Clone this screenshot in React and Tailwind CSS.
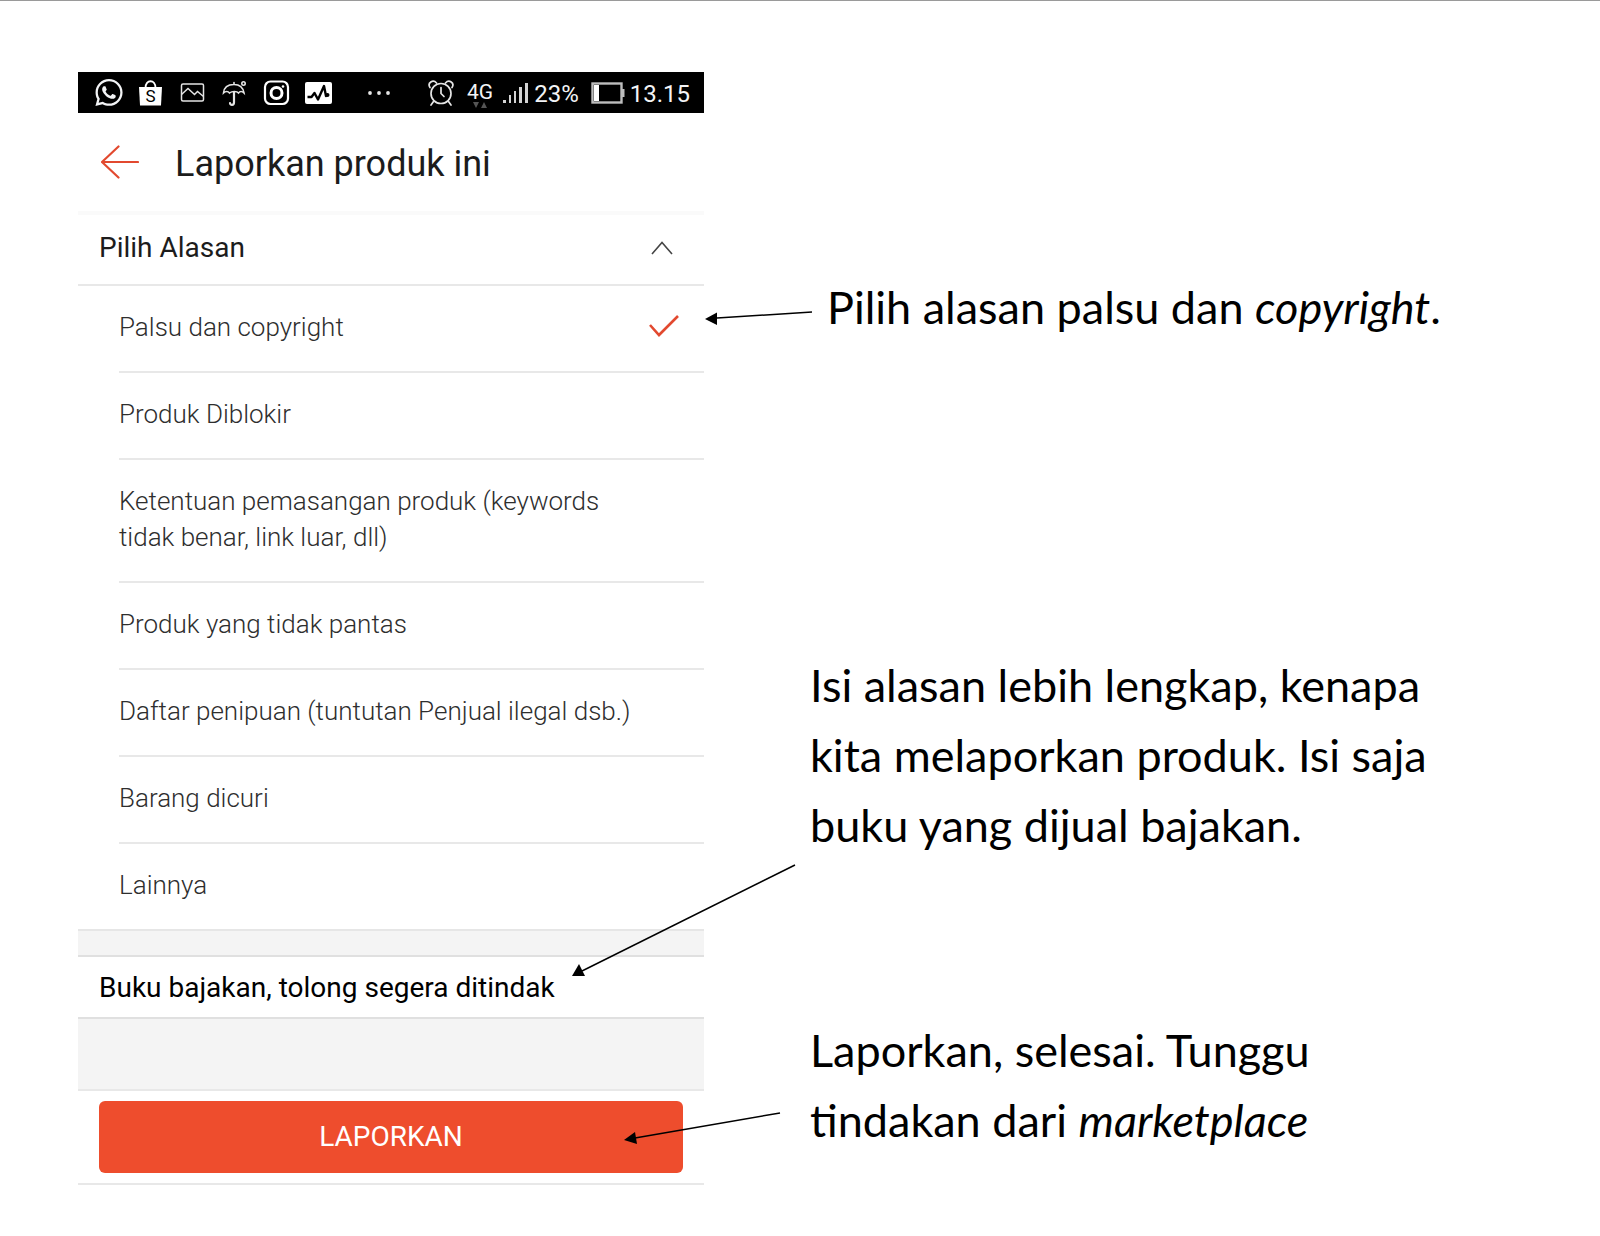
import React, { useState } from "react";
import { FaWhatsapp } from "react-icons/fa";

const reasons = [
  "Palsu dan copyright",
  "Produk Diblokir",
  "Ketentuan pemasangan produk (keywords tidak benar, link luar, dll)",
  "Produk yang tidak pantas",
  "Daftar penipuan (tuntutan Penjual ilegal dsb.)",
  "Barang dicuri",
  "Lainnya",
];

const StatusBar = () => (
  <div className="flex h-[41px] items-center justify-between bg-black pl-[17px] pr-[14px] text-[24px] leading-none text-gray-100">
    <div className="flex items-center gap-[14px]">
      <FaWhatsapp className="h-[31px] w-7" />
      {/* shopping bag */}
      <svg viewBox="0 0 28 28" className="size-7">
        <path d="M2 8h23l-1 18.500H3z" fill="#fff" />
        <path d="M8.500 9c0-9 10-9 10 0" fill="none" stroke="#fff" strokeWidth="1.800" />
        <text x="13.500" y="23" textAnchor="middle" fontSize="17" fontFamily="Roboto" fill="#000">S</text>
      </svg>
      {/* gallery */}
      <svg viewBox="0 0 28 28" className="size-7" fill="none" stroke="#e5e5e5" strokeWidth="1.500">
        <rect x="2.500" y="5" width="22" height="17" rx="1.500" />
        <path d="M2.500 15.500l6.500-6 6.500 6 3-3 6 5" />
      </svg>
      {/* umbrella */}
      <svg viewBox="0 0 28 28" className="size-7" fill="none" stroke="#e5e5e5" strokeWidth="1.600" strokeLinecap="round">
        <path d="M13 3.500v2M2.500 14C3 8 7.500 5.500 13 5.500c4.500 0 9 2.500 10 8.500-2-2-4-2-5.500 0-1.500-2-6.500-2-9 0-1.500-2-4-2-6 0z" />
        <path d="M13 13v10.500c0 3-4 3-4 .500" strokeWidth="2.200" />
        <circle cx="22.500" cy="4.500" r="1.700" />
      </svg>
      {/* camera */}
      <svg viewBox="0 0 28 28" className="size-7" fill="none" stroke="#fff">
        <rect x="2" y="2.500" width="23" height="22.500" rx="5.500" strokeWidth="2.200" />
        <circle cx="13.500" cy="14" r="5.500" strokeWidth="3" />
        <circle cx="20" cy="7.500" r="1.300" fill="#fff" stroke="none" />
      </svg>
      {/* activity */}
      <svg viewBox="0 0 28 28" className="size-7">
        <rect x="0" y="3" width="27" height="22" rx="2" fill="#fff" />
        <path d="M2.500 18h4l3-4 3.500 6.500 6-13.500 2 10 2-2" fill="none" stroke="#000" strokeWidth="2.400" strokeLinejoin="round" />
        <circle cx="22.500" cy="16" r="2" />
      </svg>
      <svg viewBox="0 0 24 8" className="ml-5 h-2 w-6" fill="#e5e5e5">
        <circle cx="3" cy="4" r="1.900" />
        <circle cx="12" cy="4" r="1.900" />
        <circle cx="21" cy="4" r="1.900" />
      </svg>
    </div>
    <div className="flex items-center">
      {/* alarm */}
      <svg viewBox="0 0 28 28" className="mr-3 size-7" fill="none" stroke="#e5e5e5" strokeWidth="1.700" strokeLinecap="round">
        <circle cx="14" cy="14.500" r="10" />
        <path d="M14 8.500v6l3 3M6.500 22.500L4 26M21.500 22.500L24 26" />
        <path d="M3 8.500C0 4 6 0 9.500 4M25 8.500C28 4 22 0 18.500 4" />
      </svg>
      <div className="mr-[10px] flex flex-col items-center pt-1 text-[21px]">
        <span className="leading-5">4G</span>
        <svg viewBox="0 0 14 6" className="h-[6px] w-[14px]" fill="#555">
          <path d="M0 0h6L3 6zM8 6h6L11 0z" />
        </svg>
      </div>
      <svg viewBox="0 0 26 22" className="mr-[5px] h-[22px] w-[26px]" fill="#d4d4d4">
        <rect x="0" y="18" width="3" height="3" />
        <rect x="6" y="13" width="2" height="8" />
        <rect x="11" y="9" width="2" height="12" />
        <rect x="16" y="5" width="3" height="16" />
        <rect x="22" y="1" width="3" height="20" />
      </svg>
      <span className="mr-3 pt-[2px]">23%</span>
      <svg viewBox="0 0 34 22" className="mr-[5px] h-[22px] w-[34px]">
        <rect x="1.500" y="1.500" width="29" height="19" fill="none" stroke="#bdbdbd" strokeWidth="2.400" />
        <rect x="3" y="3" width="5" height="16" fill="#fff" />
        <rect x="31" y="7" width="2.500" height="8" fill="#bdbdbd" />
      </svg>
      <span className="pt-[2px]">13.15</span>
    </div>
  </div>
);

const Note = ({ children, className, arrow }) => (
  <div className={`relative text-[45px] leading-[70px] ${className}`}>
    {children}
    {arrow}
  </div>
);

const ReportScreen = () => {
  const [selected, setSelected] = useState(reasons[0]);
  const [open, setOpen] = useState(true);
  const [detail, setDetail] = useState("Buku bajakan, tolong segera ditindak");

  return (
    <section className="font-[Roboto,sans-serif] text-[#1c1c1c]">
      <StatusBar />
      <header className="flex h-[98px] items-center gap-9 pl-[23px]">
        <button type="button" aria-label="Kembali">
          <svg viewBox="0 0 38 34" className="h-[34px] w-[38px]" fill="none" stroke="#e2492f" strokeWidth="2.200" strokeLinecap="round">
            <path d="M37 17H1M17.500 1.500L1 17l16.500 15.500" />
          </svg>
        </button>
        <h1 className="pt-1 text-[36px] leading-none">Laporkan produk ini</h1>
      </header>

      <button
        type="button"
        aria-expanded={open}
        onClick={() => setOpen(!open)}
        className="flex h-[75px] w-full items-center justify-between border-b-2 border-t-4 border-b-[#e8e8e8] border-t-[#fafafa] pb-1 pl-[21px] pr-[31px] text-[28px]"
      >
        Pilih Alasan
        <svg viewBox="0 0 22 14" className="h-[14px] w-[22px]" fill="none" stroke="#444" strokeWidth="1.600">
          <path d="M1 13L11 1.500 21 13" />
        </svg>
      </button>

      {open && (
        <div role="radiogroup" aria-label="Pilih Alasan" className="border-b-2 border-[#e6e6e6]">
          {reasons.map((reason) => (
            <label
              key={reason}
              className="ml-[41px] flex items-center justify-between border-b-2 border-[#e8e8e8] pb-[26px] pr-[25px] pt-[23px] text-[26px] font-light leading-9 text-[#2e2e2e] last:border-b-0"
            >
              <input
                type="radio"
                name="reason"
                className="sr-only"
                checked={selected === reason}
                onChange={() => setSelected(reason)}
              />
              <span className="max-w-[520px]">{reason}</span>
              {selected === reason && (
                <svg viewBox="0 0 30 24" className="h-6 w-[30px]" fill="none" stroke="#e2492f" strokeWidth="2.600">
                  <path d="M1 10l9 10L29 1" />
                </svg>
              )}
            </label>
          ))}
        </div>
      )}

      <div className="h-6 bg-[#f4f4f4]" />
      <input
        type="text"
        aria-label="Alasan lengkap"
        value={detail}
        onChange={(e) => setDetail(e.target.value)}
        className="block h-16 w-full border-y-2 border-[#e0e0e0] px-[21px] text-[28px] text-black outline-none"
      />
      <div className="h-[70px] bg-[#f4f4f4]" />
      <div className="border-y-2 border-[#e8e8e8] px-[21px] py-[10px]">
        <button type="button" className="block h-[72px] w-full rounded-md bg-[#ee4d2d] text-[28px] text-white">
          LAPORKAN
        </button>
      </div>
    </section>
  );
};

const App = () => (
  <main className="grid grid-cols-[626fr_789fr] border-t border-[#9a9a9a] bg-white pb-[50px] pl-[78px] pr-[107px] pt-[71px]">
    <ReportScreen />

    <aside className="flex flex-col pl-[106px] pt-[200px] font-[Lato,sans-serif] text-black">
      <Note
        className="pl-[17px]"
        arrow={
          <svg viewBox="0 0 108 20" className="absolute left-[-105px] top-[33px] h-5 w-[108px]">
            <path d="M107 7L12 13" stroke="#000" strokeWidth="1.500" />
            <path d="M0 14L12 7.500V20z" />
          </svg>
        }
      >
        Pilih alasan palsu dan <em>copyright</em>.
      </Note>

      <Note
        className="mt-[308px] max-w-[650px]"
        arrow={
          <svg viewBox="0 0 224 114" className="absolute left-[-238px] top-[214px] h-[114px] w-[224px]">
            <path d="M223 1L10 107" stroke="#000" strokeWidth="1.500" />
            <path d="M0 112L7 100l6 12z" />
          </svg>
        }
      >
        Isi alasan lebih lengkap, kenapa kita melaporkan produk. Isi saja buku yang dijual bajakan.
      </Note>

      <Note
        className="mt-[155px] max-w-[550px]"
        arrow={
          <svg viewBox="0 0 158 34" className="absolute left-[-186px] top-[96px] h-[34px] w-[158px]">
            <path d="M156 2L11 27" stroke="#000" strokeWidth="1.500" />
            <path d="M0 29L11 21l2 12z" />
          </svg>
        }
      >
        Laporkan, selesai. Tunggu tindakan dari <em>marketplace</em>
      </Note>
    </aside>
  </main>
);

export default App;
